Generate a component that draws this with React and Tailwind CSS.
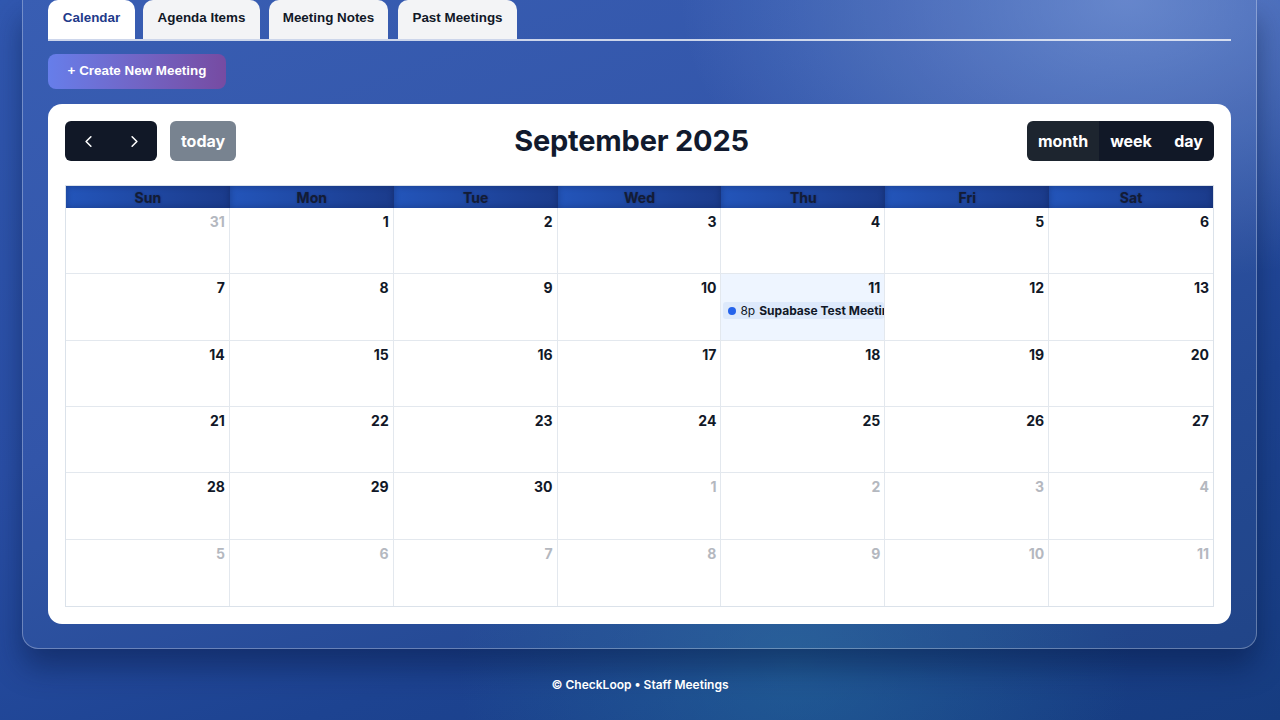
import React from "react";
import { ChevronLeft, ChevronRight } from "lucide-react";

const weeks = [
  [[31, 0], [1, 1], [2, 1], [3, 1], [4, 1], [5, 1], [6, 1]],
  [[7, 1], [8, 1], [9, 1], [10, 1], [11, 1], [12, 1], [13, 1]],
  [[14, 1], [15, 1], [16, 1], [17, 1], [18, 1], [19, 1], [20, 1]],
  [[21, 1], [22, 1], [23, 1], [24, 1], [25, 1], [26, 1], [27, 1]],
  [[28, 1], [29, 1], [30, 1], [1, 0], [2, 0], [3, 0], [4, 0]],
  [[5, 0], [6, 0], [7, 0], [8, 0], [9, 0], [10, 0], [11, 0]],
];
const days = ["Sun", "Mon", "Tue", "Wed", "Thu", "Fri", "Sat"];

const arial = { fontFamily: "'Liberation Sans', Arial, sans-serif" };

export default function App() {
  return (
    <div
      className="min-h-screen w-full overflow-hidden bg-[radial-gradient(ellipse_at_88%_0%,rgba(140,170,230,0.55),transparent_28%),radial-gradient(ellipse_at_62%_92%,rgba(40,120,160,0.45),transparent_30%),linear-gradient(160deg,#3158b0_0%,#2a4fa6_40%,#1d4391_70%,#163c80_100%)]"
      style={{ fontFamily: "Inter, 'Noto Sans', sans-serif" }}
    >
      <div className="px-[22px] pr-[23px]">
        <div className="rounded-b-[16px] border-x border-b border-white/30 bg-white/[0.04] px-[25px] pb-[24px] shadow-[0_18px_30px_rgba(5,20,60,0.45)]">
          {/* Tabs */}
          <div className="flex items-end border-b-2 border-white/75" style={arial}>
            <div className="flex h-[39px] w-[87px] items-center justify-center rounded-t-[10px] bg-white pb-[2px] text-[13.4px] font-bold text-[#1e3a8a]">
              Calendar
            </div>
            <div className="ml-[8px] flex h-[39px] w-[117px] items-center justify-center rounded-t-[10px] bg-[#f3f4f6] pb-[2px] text-[13.4px] font-bold text-[#111827]">
              Agenda Items
            </div>
            <div className="ml-[9px] flex h-[39px] w-[119px] items-center justify-center rounded-t-[10px] bg-[#f3f4f6] pb-[2px] text-[13.4px] font-bold text-[#111827]">
              Meeting Notes
            </div>
            <div className="ml-[10px] flex h-[39px] w-[119px] items-center justify-center rounded-t-[10px] bg-[#f3f4f6] pb-[2px] text-[13.4px] font-bold text-[#111827]">
              Past Meetings
            </div>
          </div>

          {/* Create button */}
          <div className="mt-[13px]">
            <button
              className="flex h-[35px] w-[178px] items-center justify-center rounded-[8px] bg-gradient-to-r from-[#667eea] to-[#764ba2] text-[13.4px] font-bold text-white"
              style={arial}
            >
              + Create New Meeting
            </button>
          </div>

          {/* Calendar card */}
          <div className="mt-[15px] rounded-[14px] bg-white px-[17px] pt-[17px] pb-[17px]">
            <div className="flex h-[40px] items-center justify-between">
              <div className="flex items-center gap-[13px]">
                <div className="flex h-[40px] w-[92px] overflow-hidden rounded-[6px] bg-[#111827]">
                  <div className="flex w-[46px] items-center justify-center text-white">
                    <ChevronLeft size={19} strokeWidth={2} />
                  </div>
                  <div className="flex w-[46px] items-center justify-center text-white">
                    <ChevronRight size={19} strokeWidth={2} />
                  </div>
                </div>
                <div className="flex h-[40px] w-[66px] items-center justify-center rounded-[6px] bg-[#788390] text-[16px] font-bold text-white">
                  today
                </div>
              </div>
              <div className="text-[29px] font-bold tracking-[-0.2px] text-[#111a2e]">
                September 2025
              </div>
              <div className="flex justify-end">
                <div className="flex h-[40px] overflow-hidden rounded-[6px] text-[16px] font-bold text-white">
                  <div className="flex w-[72px] items-center justify-center bg-[#1d252f]">month</div>
                  <div className="flex w-[64px] items-center justify-center bg-[#111827]">week</div>
                  <div className="flex w-[51px] items-center justify-center bg-[#111827]">day</div>
                </div>
              </div>
            </div>

            {/* Table */}
            <div className="mt-[24px] border border-[#dbe2ea]">
              <div className="grid grid-cols-7">
                {days.map((d) => (
                  <div
                    key={d}
                    className="flex h-[22px] items-center justify-center bg-gradient-to-r from-[#2355ba] to-[#1b3b8b] text-[14px] font-bold text-[#131c36] shadow-[inset_0_0_6px_rgba(10,20,60,0.35)] [text-shadow:0_0_2px_rgba(20,30,70,0.5)]"
                  >
                    {d}
                  </div>
                ))}
              </div>
              <div className="grid h-[398px] grid-cols-7 grid-rows-6">
                {weeks.map((w, wi) =>
                  w.map(([n, cur], di) => {
                    const isToday = wi === 1 && di === 4;
                    return (
                      <div
                        key={wi + "-" + di}
                        className={
                          "relative flex min-w-0 flex-col border-[#e3e8ee] px-[4px] pt-[5px] " +
                          (di < 6 ? "border-r " : "") +
                          (wi < 5 ? "border-b " : "") +
                          (isToday ? "bg-[#eef5ff]" : "bg-white")
                        }
                      >
                        <div
                          className={
                            "text-right text-[14px] font-bold leading-[17px] " +
                            (cur ? "text-[#111827]" : "text-[#b4b8bf]")
                          }
                        >
                          {n}
                        </div>
                        {isToday && (
                          <div className="mt-[6px] -mr-[4px] -ml-[2px] flex h-[17px] items-center overflow-hidden whitespace-nowrap rounded-[3px] bg-[#dde9fb] pl-[5px] text-[12px] text-[#111827]">
                            <span className="mr-[4px] inline-block h-[8px] w-[8px] shrink-0 rounded-full bg-[#2563eb]"></span>
                            <span className="mr-[4px]">8p</span>
                            <span className="font-bold">Supabase Test Meeting</span>
                          </div>
                        )}
                      </div>
                    );
                  })
                )}
              </div>
            </div>
          </div>
        </div>
      </div>

      <div className="pt-[27px] text-center text-[12px] font-semibold text-white">
        © CheckLoop • Staff Meetings
      </div>
    </div>
  );
}
